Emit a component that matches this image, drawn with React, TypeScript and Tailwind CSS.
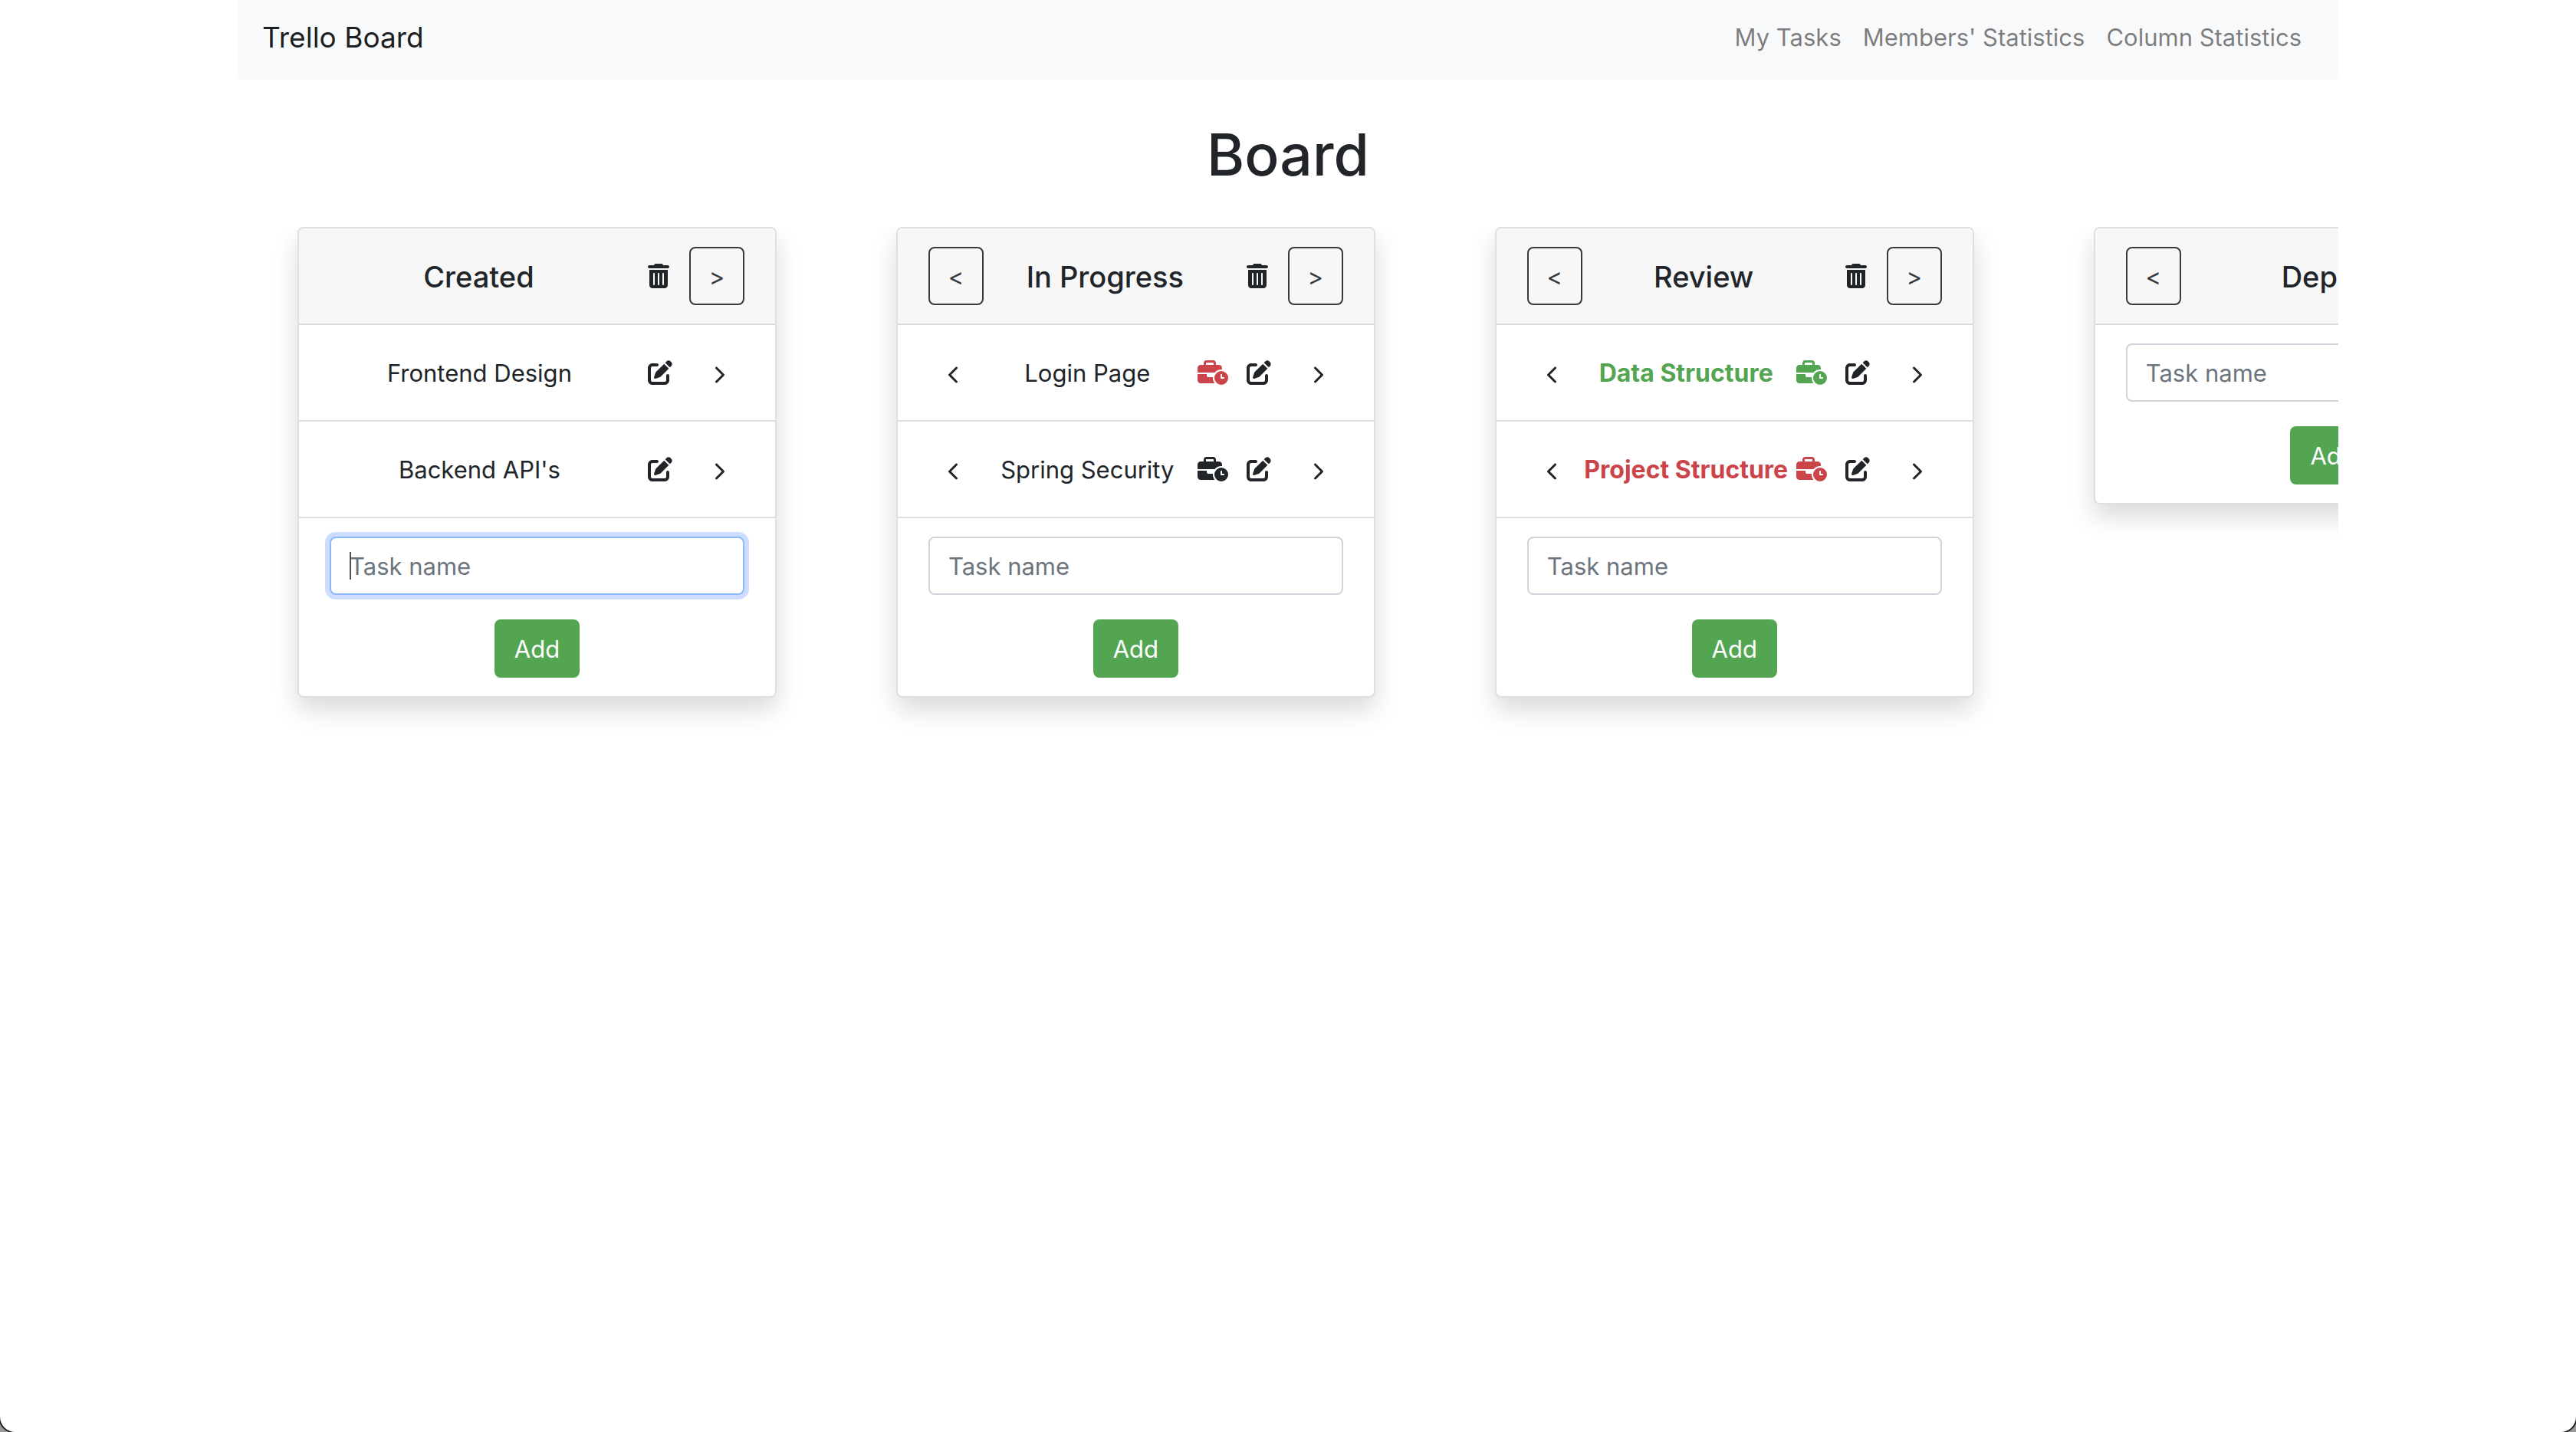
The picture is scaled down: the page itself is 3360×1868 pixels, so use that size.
import React from "react";
import { FaBusinessTime, FaPenToSquare, FaTrashCan } from "react-icons/fa6";
import { IoIosArrowBack, IoIosArrowForward } from "react-icons/io";

type Tone = "plain" | "done" | "late";

interface Task {
  name: string;
  tone: Tone;
  workTone?: Tone;
}

interface Column {
  title: string;
  tasks: Task[];
  active?: boolean;
}

const columns: Column[] = [
  {
    title: "Created",
    active: true,
    tasks: [
      { name: "Frontend Design", tone: "plain" },
      { name: "Backend API's", tone: "plain" },
    ],
  },
  {
    title: "In Progress",
    tasks: [
      { name: "Login Page", tone: "plain", workTone: "late" },
      { name: "Spring Security", tone: "plain", workTone: "plain" },
    ],
  },
  {
    title: "Review",
    tasks: [
      { name: "Data Structure", tone: "done", workTone: "done" },
      { name: "Project Structure", tone: "late", workTone: "late" },
    ],
  },
  { title: "Deploy", tasks: [] },
];

const toneText: Record<Tone, string> = {
  plain: "text-[#212529]",
  done: "text-[#53a551]",
  late: "text-[#cb444a]",
};

function OutlineButton({ label, children }: { label: string; children: React.ReactNode }) {
  return (
    <button
      type="button"
      aria-label={label}
      className="flex h-[76px] w-[72px] shrink-0 items-center justify-center rounded-lg border-2 border-[#343a40] pt-0.5 text-[31px] text-[#343a40]"
    >
      {children}
    </button>
  );
}

function TaskRow({ task, hasPrev, hasNext }: { task: Task; hasPrev: boolean; hasNext: boolean }) {
  return (
    <li className="flex h-[126px] items-center border-b-2 border-[#dfdfdf] px-10">
      {hasPrev && (
        <button type="button" aria-label="Move task back" className="flex w-16 shrink-0 justify-center pt-1.5">
          <IoIosArrowBack className="size-8" />
        </button>
      )}
      <span
        className={`min-w-0 flex-1 pt-0.5 text-center whitespace-nowrap ${
          task.tone === "plain" ? "text-[31px]" : "text-[32px] font-bold"
        } ${toneText[task.tone]}`}
      >
        {task.name}
      </span>
      {task.workTone && (
        <button type="button" aria-label="Log work" className={`shrink-0 ${toneText[task.workTone]}`}>
          <FaBusinessTime className="h-8 w-10" />
        </button>
      )}
      <button type="button" aria-label="Edit task" className="flex w-[86px] shrink-0 pl-6">
        <FaPenToSquare className="size-8" />
      </button>
      {hasNext && (
        <button type="button" aria-label="Move task forward" className="flex w-16 shrink-0 justify-center pt-1.5">
          <IoIosArrowForward className="size-8" />
        </button>
      )}
    </li>
  );
}

function ColumnCard({ column, first, last }: { column: Column; first: boolean; last: boolean }) {
  return (
    <div className="w-[28.5%] shrink-0 px-[78px]">
      <section className="overflow-hidden rounded-lg border-2 border-[#dfdfdf] bg-white shadow-[0_16px_32px_rgba(0,0,0,0.15)]">
        <header className="flex h-[126px] items-center border-b-2 border-[#d9d9d9] bg-[#f7f7f7] px-10">
          {!first && <OutlineButton label="Move column left">&lt;</OutlineButton>}
          <h2 className="min-w-0 flex-1 pt-0.5 text-center text-[38px] font-medium whitespace-nowrap">{column.title}</h2>
          <button type="button" aria-label="Delete column" className="flex w-20 shrink-0 justify-center">
            <FaTrashCan className="h-8 w-7" />
          </button>
          {!last && <OutlineButton label="Move column right">&gt;</OutlineButton>}
        </header>
        <ul>
          {column.tasks.map((task) => (
            <TaskRow key={task.name} task={task} hasPrev={!first} hasNext={!last} />
          ))}
        </ul>
        <form className="flex flex-col items-center gap-8 px-10 py-6" onSubmit={(e) => e.preventDefault()}>
          <div className="relative w-full">
            <input
              type="text"
              placeholder="Task name"
              aria-label={`New task in ${column.title}`}
              className={`block h-[76px] w-full rounded-lg border-2 bg-white px-6 text-[31px] text-[#495057] outline-none placeholder:text-[#6c757d] ${
                column.active ? "border-[#8cb9f9] ring-6 ring-[#ccddff]" : "border-[#ced4da]"
              }`}
            />
            {column.active && <span className="absolute top-5 left-[26px] h-9 w-0.5 bg-[#495057]" />}
          </div>
          <button type="submit" className="h-[76px] rounded-lg bg-[#53a551] px-[26px] pt-0.5 text-[31px] text-white">
            Add
          </button>
        </form>
      </section>
    </div>
  );
}

export default function App() {
  return (
    <div className="min-h-screen bg-[#999999] font-[Inter,sans-serif] text-[#212529]">
      <div className="min-h-screen rounded-b-[20px] bg-white ring-2 ring-[#222222]">
        <div className="mx-auto w-full max-w-[2740px]">
          <nav className="flex items-center justify-between rounded-b-lg bg-[#f8f9fb] px-8 pb-2">
            <a href="#" className="flex h-24 items-center pt-0.5 text-[37px] text-black/90">
              Trello Board
            </a>
            <div className="flex items-center gap-7 pt-0.5 pr-4 text-[31px] text-black/50">
              <a href="#my-tasks">My Tasks</a>
              <a href="#members">Members' Statistics</a>
              <a href="#columns">Column Statistics</a>
            </div>
          </nav>
          <main>
            <h1 className="mt-[50px] mb-[46px] text-center text-[75px] leading-[96px] font-medium">Board</h1>
            <div className="flex items-start overflow-hidden pb-16">
              {columns.map((column, i) => (
                <ColumnCard
                  key={column.title}
                  column={column}
                  first={i === 0}
                  last={i === columns.length - 1}
                />
              ))}
            </div>
          </main>
        </div>
      </div>
    </div>
  );
}
